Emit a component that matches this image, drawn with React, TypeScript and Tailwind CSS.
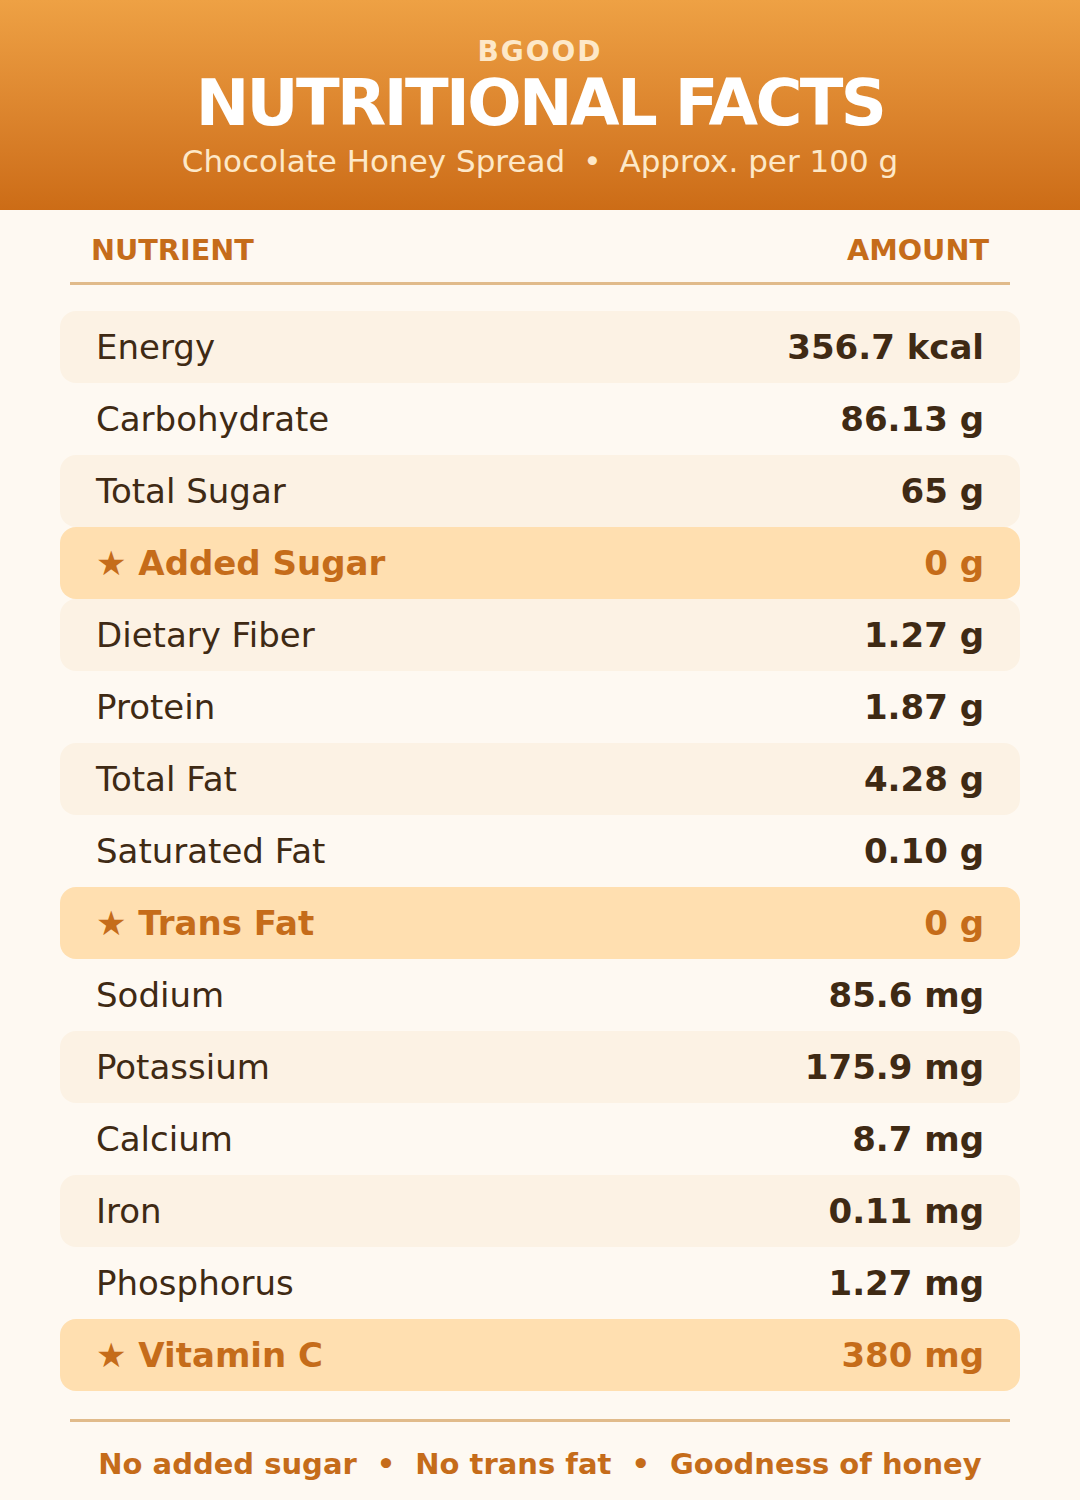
import React from "react";

type Row = { name: string; value: string; hl?: boolean };

const rows: Row[] = [
  { name: "Energy", value: "356.7 kcal" },
  { name: "Carbohydrate", value: "86.13 g" },
  { name: "Total Sugar", value: "65 g" },
  { name: "Added Sugar", value: "0 g", hl: true },
  { name: "Dietary Fiber", value: "1.27 g" },
  { name: "Protein", value: "1.87 g" },
  { name: "Total Fat", value: "4.28 g" },
  { name: "Saturated Fat", value: "0.10 g" },
  { name: "Trans Fat", value: "0 g", hl: true },
  { name: "Sodium", value: "85.6 mg" },
  { name: "Potassium", value: "175.9 mg" },
  { name: "Calcium", value: "8.7 mg" },
  { name: "Iron", value: "0.11 mg" },
  { name: "Phosphorus", value: "1.27 mg" },
  { name: "Vitamin C", value: "380 mg", hl: true },
];

export default function App() {
  return (
    <div className="w-[1080px] h-[1500px] bg-[#fef9f2] font-['DejaVu_Sans',sans-serif] overflow-hidden">
      <header className="h-[210px] bg-gradient-to-b from-[#eea144] to-[#cc6c16] flex flex-col items-center pt-[35px]">
        <div className="text-[28px] leading-[34px] font-bold text-[#fde8c8] tracking-[2px]">BGOOD</div>
        <div className="text-[64px] leading-[68px] font-bold text-white tracking-[-2.6px]">NUTRITIONAL FACTS</div>
        <div className="mt-[6px] text-[31px] leading-[36px] text-[#fde8c8]">
          Chocolate Honey Spread<span className="mx-[18px]">•</span>Approx. per 100 g
        </div>
      </header>
      <main className="px-[60px]">
        <div className="mx-[10px] pt-[24px] pb-[16px] px-[21px] border-b-[3px] border-[#e1bb8b] flex justify-between text-[28.7px] leading-[32px] font-bold text-[#c56c1a]">
          <span>NUTRIENT</span>
          <span>AMOUNT</span>
        </div>
        <div className="mt-[26px] flex flex-col">
          {rows.map((r, i) => (
            <div
              key={r.name}
              className={
                "h-[72px] rounded-[16px] px-[36px] flex items-center justify-between text-[34px] " +
                (r.hl
                  ? "bg-[#ffdfb0] text-[#c56c1a] font-bold"
                  : i % 2 === 0
                  ? "bg-[#fcf2e4] text-[#3f2a14]"
                  : "text-[#3f2a14]")
              }
            >
              <span>{r.hl ? "★ " + r.name : r.name}</span>
              <span className="font-bold">{r.value}</span>
            </div>
          ))}
        </div>
        <div className="mx-[10px] mt-[28px] border-t-[3px] border-[#e1bb8b]" />
        <div className="mt-[26px] flex justify-center text-[29px] leading-[32px] font-bold text-[#c56c1a]">
          <span>No added sugar</span>
          <span className="mx-[20px]">•</span>
          <span>No trans fat</span>
          <span className="mx-[20px]">•</span>
          <span>Goodness of honey</span>
        </div>
      </main>
    </div>
  );
}
